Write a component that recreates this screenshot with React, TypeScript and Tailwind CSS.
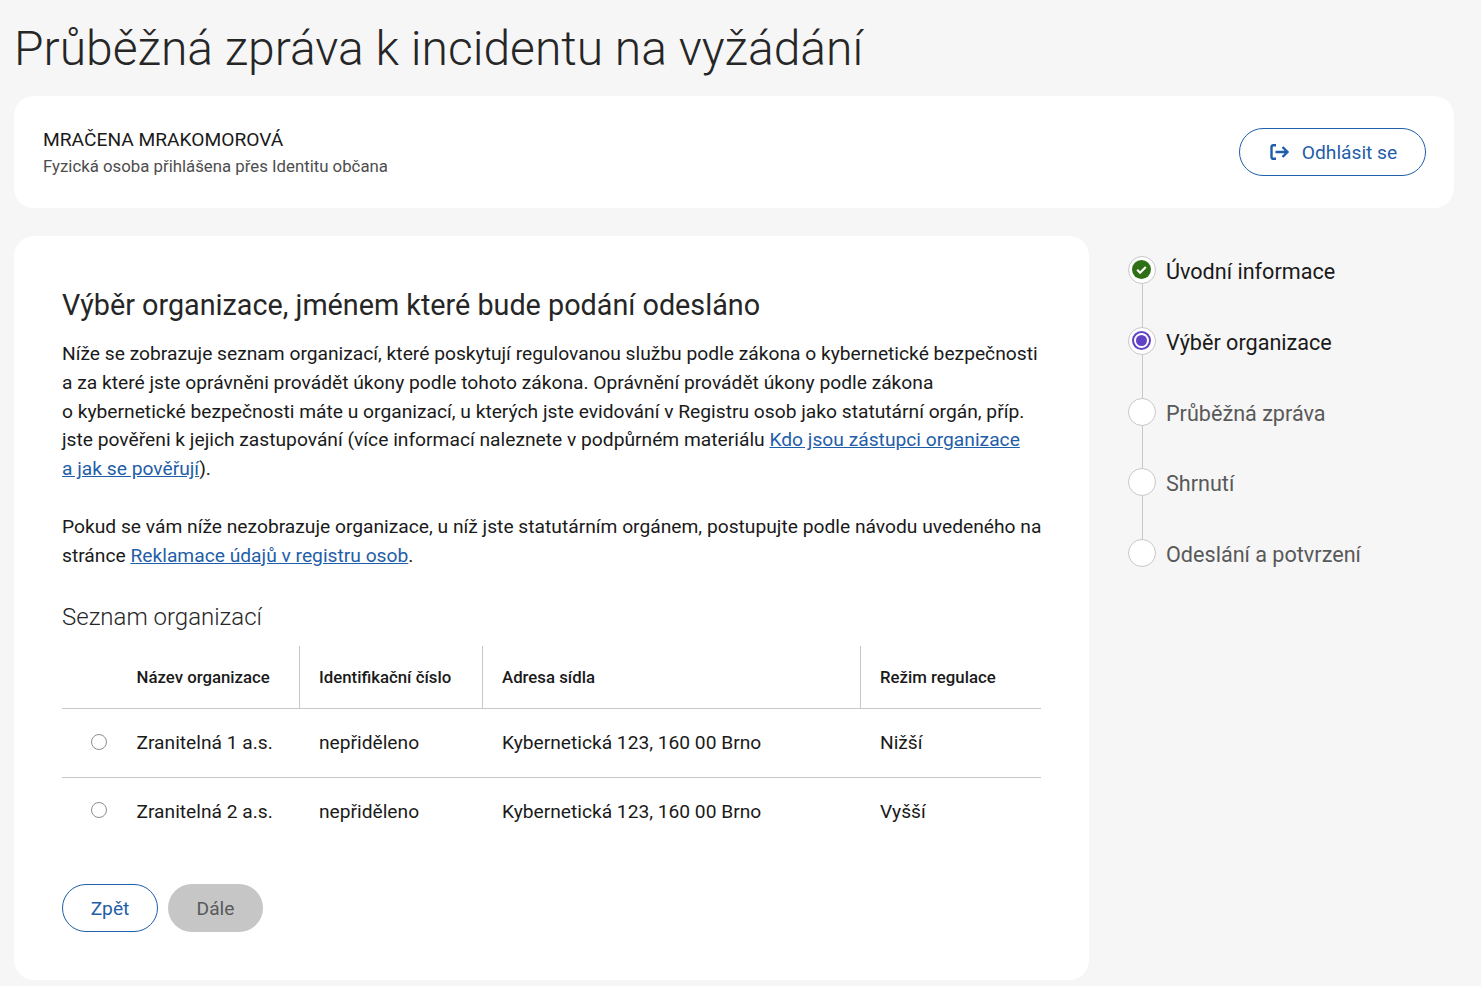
const steps = [
  { label: 'Úvodní informace', state: 'done' },
  { label: 'Výběr organizace', state: 'current' },
  { label: 'Průběžná zpráva', state: 'todo' },
  { label: 'Shrnutí', state: 'todo' },
  { label: 'Odeslání a potvrzení', state: 'todo' },
]

const rows = [
  { name: 'Zranitelná 1 a.s.', regime: 'Nižší' },
  { name: 'Zranitelná 2 a.s.', regime: 'Vyšší' },
]

function StepIcon({ state }: { state: string }) {
  return (
    <div className="w-[28px] h-[28px] pr-[1px] pb-[1px] shrink-0 rounded-full border border-[#c8c8c8] bg-white flex items-center justify-center">
      {state === 'done' && (
        <svg width="19" height="19" viewBox="0 0 19 19">
          <circle cx="9.5" cy="9.5" r="9.5" fill="#2f6f16" />
          <path d="M5.2 9.8l2.9 2.9 5.7-5.7" fill="none" stroke="#fff" strokeWidth="2.2" />
        </svg>
      )}
      {state === 'current' && (
        <div className="w-[19px] h-[19px] rounded-full border-2 border-[#6042c4] flex items-center justify-center">
          <div className="w-[11px] h-[11px] rounded-full bg-[#6042c4]" />
        </div>
      )}
    </div>
  )
}

export default function App() {
  return (
    <div className="min-h-[986px] bg-[#f6f6f6] pl-[14px] pr-[27px] text-[#1a1a1a] font-['Roboto',sans-serif]">
      <h1 className="h-[96px] pt-[18px] text-[48px] leading-[62px] font-light whitespace-nowrap text-[#262626]">
        Průběžná zpráva k incidentu na vyžádání
      </h1>

      <div className="h-[112px] bg-white rounded-[20px] pl-[29px] pr-[28px] flex items-center justify-between">
        <div className="pt-[2px]">
          <div className="text-[19.2px] leading-[24px]">MRAČENA MRAKOMOROVÁ</div>
          <div className="text-[16.8px] leading-[24px] mt-[2px] text-[#4d4d4d]">
            Fyzická osoba přihlášena přes Identitu občana
          </div>
        </div>
        <button className="h-[48px] w-[187px] pl-[2px] rounded-[24px] border border-[#1f5ea8] text-[#1f5ea8] text-[19.2px] flex items-center justify-center gap-[12px]">
          <svg width="20" height="16" viewBox="0 0 20 16" fill="none" stroke="#1f5ea8" strokeWidth="2.4">
            <path d="M6 1.2H3.2A1.7 1.7 0 0 0 1.5 2.9v10.2a1.7 1.7 0 0 0 1.7 1.7H6" />
            <path d="M5.5 8h12M12.5 3l5 5-5 5" />
          </svg>
          <span className="pt-[2px]">Odhlásit se</span>
        </button>
      </div>

      <div className="mt-[28px] flex items-start">
        <main className="w-[1075px] h-[744px] bg-white rounded-[20px] px-[48px] pt-[49px]">
          <h2 className="text-[28.75px] leading-[40px] text-[#262626]">Výběr organizace, jménem které bude podání odesláno</h2>
          <p className="mt-[15px] text-[19.225px] leading-[28.8px] whitespace-nowrap">
            Níže se zobrazuje seznam organizací, které poskytují regulovanou službu podle zákona o kybernetické bezpečnosti
            <br />
            a za které jste oprávněni provádět úkony podle tohoto zákona. Oprávnění provádět úkony podle zákona
            <br />
            o kybernetické bezpečnosti máte u organizací, u kterých jste evidování v Registru osob jako statutární orgán, příp.
            <br />
            jste pověřeni k jejich zastupování (více informací naleznete v podpůrném materiálu{' '}
            <a href="#" className="text-[#1f5ea8] underline">Kdo jsou zástupci organizace</a>
            <br />
            <a href="#" className="text-[#1f5ea8] underline">a jak se pověřují</a>).
          </p>
          <p className="mt-[29px] text-[19.225px] leading-[28.8px] whitespace-nowrap">
            Pokud se vám níže nezobrazuje organizace, u níž jste statutárním orgánem, postupujte podle návodu uvedeného na
            <br />
            stránce <a href="#" className="text-[#1f5ea8] underline">Reklamace údajů v registru osob</a>.
          </p>

          <h3 className="mt-[28px] text-[24px] leading-[36px] font-light text-[#262626]">Seznam organizací</h3>

          <table className="mt-[11px] w-[979px] table-fixed border-collapse text-[19.2px]">
            <thead>
              <tr className="h-[63px] border-b border-[#c8c8c8] text-left text-[16.8px]">
                <th className="w-[74.5px]" />
                <th className="w-[162.5px] pt-[2px] border-r border-[#c8c8c8] font-medium">Název organizace</th>
                <th className="w-[183px] pt-[2px] pl-[19.5px] border-r border-[#c8c8c8] font-medium">Identifikační číslo</th>
                <th className="w-[378px] pt-[2px] pl-[19.5px] border-r border-[#c8c8c8] font-medium">Adresa sídla</th>
                <th className="pl-[19.5px] pt-[2px] font-medium">Režim regulace</th>
              </tr>
            </thead>
            <tbody>
              {rows.map((row, i) => (
                <tr key={row.name} className={`h-[69px] ${i === 0 ? 'border-b border-[#c8c8c8]' : ''}`}>
                  <td>
                    <div className={`ml-[29px] w-4 h-4 rounded-full border border-[#8c8c96] bg-white ${i === 0 ? '-mt-[2px]' : '-mt-[4px]'}`} />
                  </td>
                  <td>{row.name}</td>
                  <td className="pl-[20px]">nepřiděleno</td>
                  <td className="pl-[20px]">Kybernetická 123, 160 00 Brno</td>
                  <td className="pl-[20px]">{row.regime}</td>
                </tr>
              ))}
            </tbody>
          </table>

          <div className="mt-[37px] flex gap-[10px]">
            <button className="h-[48px] w-[96px] pt-[3px] rounded-[24px] border border-[#1f5ea8] text-[#1f5ea8] text-[19.2px]">Zpět</button>
            <button className="h-[48px] w-[95px] pt-[3px] rounded-[24px] bg-[#c6c6c6] text-[#595959] text-[19.2px]">Dále</button>
          </div>
        </main>

        <aside className="ml-[39px] pt-[20px]">
          {steps.map((step, i) => (
            <div key={step.label} className="relative h-[70.8px] flex items-start gap-[10px]">
              <StepIcon state={step.state} />
              {i < steps.length - 1 && (
                <div className="absolute left-[14px] top-[28px] bottom-0 w-px bg-[#c8c8c8]" />
              )}
              <span className={`pt-[1px] text-[21.6px] leading-[30px] ${step.state === 'todo' ? 'text-[#595959]' : 'text-[#1a1a1a]'}`}>
                {step.label}
              </span>
            </div>
          ))}
        </aside>
      </div>
    </div>
  )
}
